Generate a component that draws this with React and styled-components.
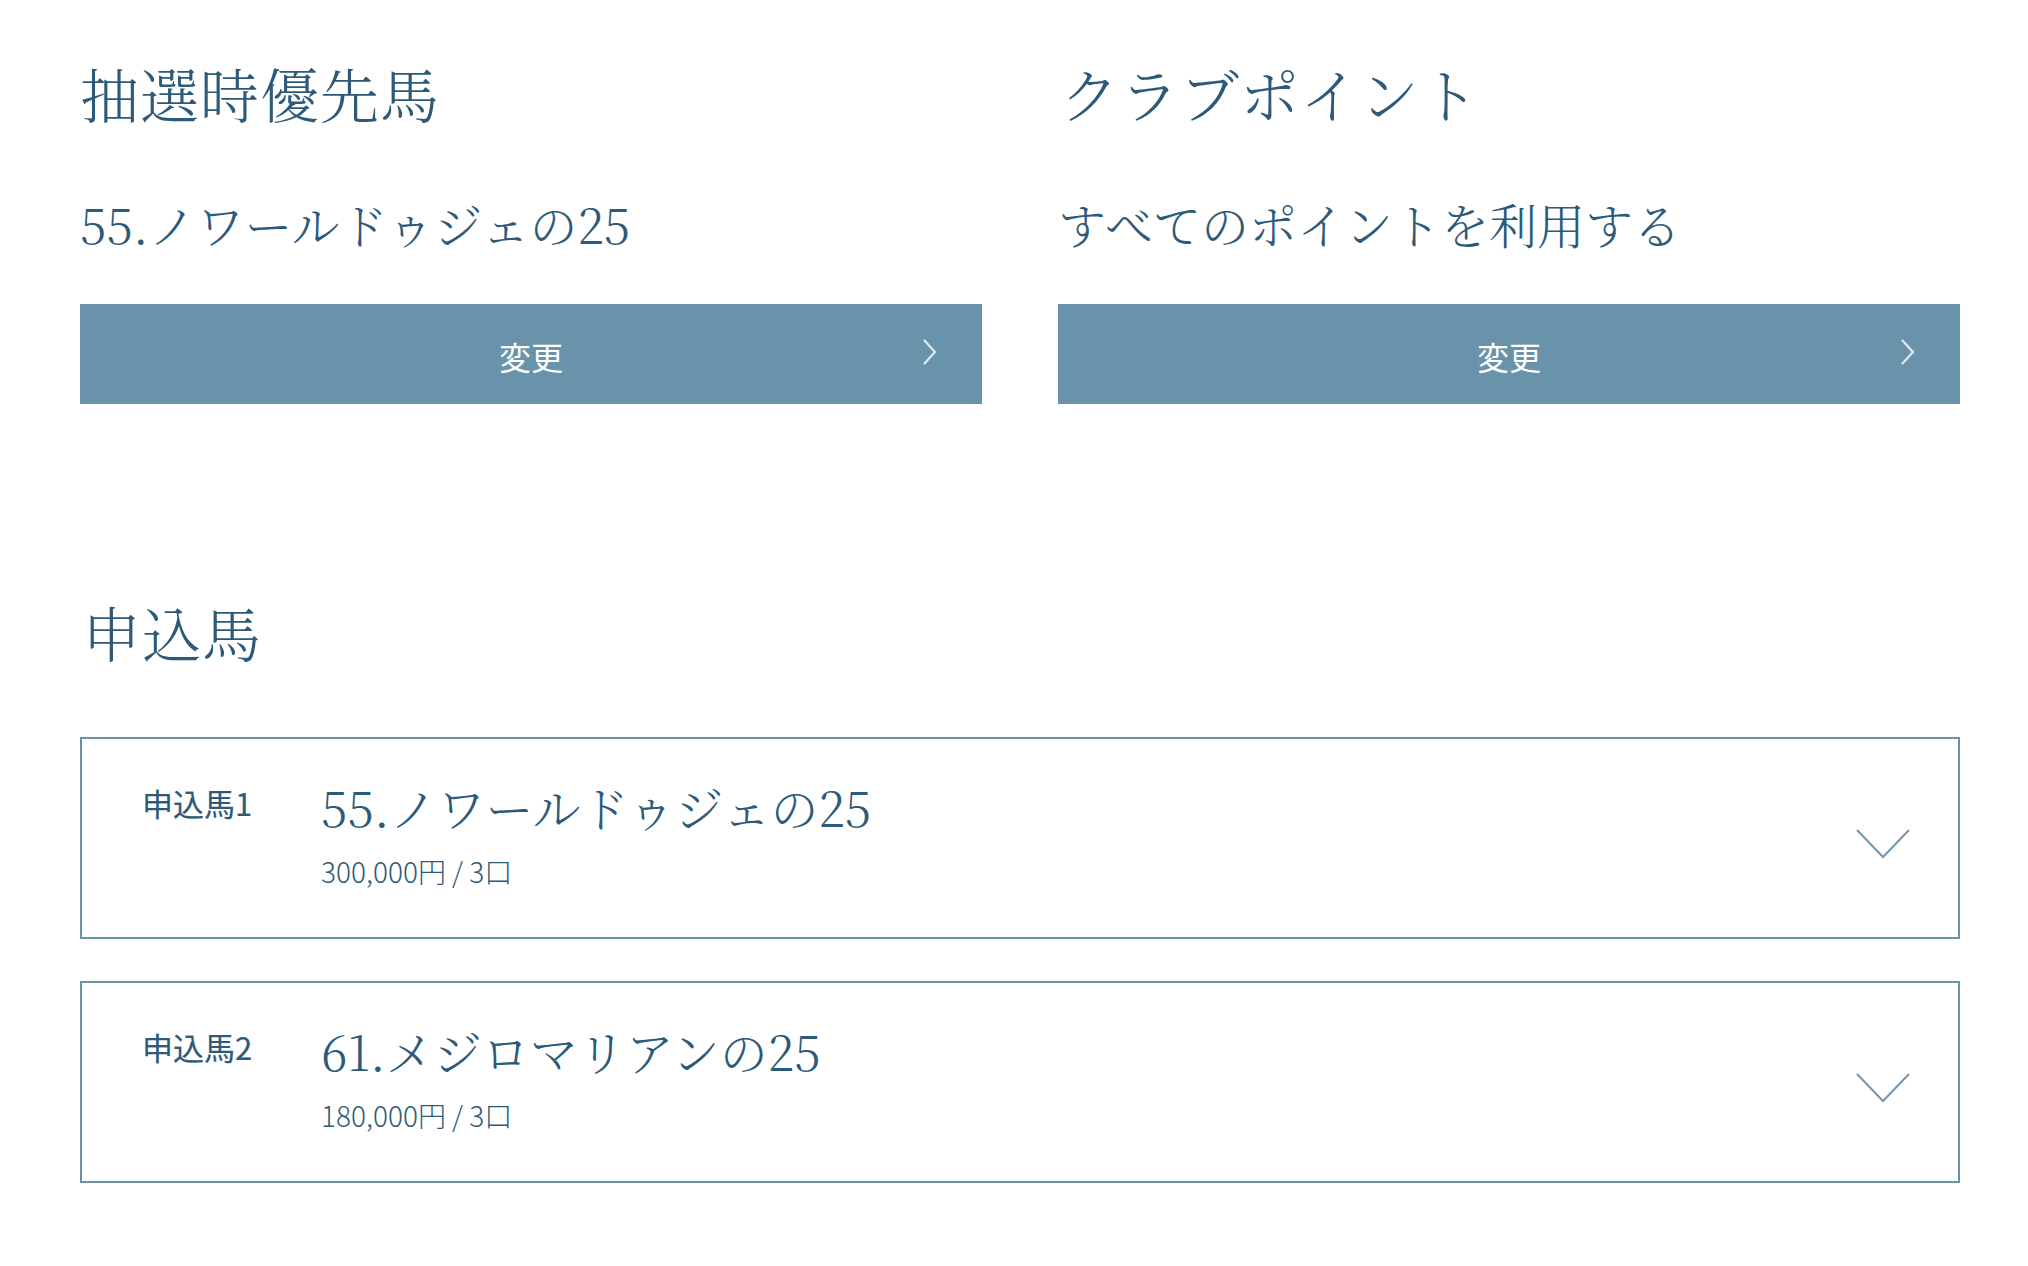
import React from 'react';
import styled, { createGlobalStyle } from 'styled-components';

const serif = `"Noto Serif CJK JP", "Noto Serif JP", "Liberation Serif", "Noto Sans CJK JP", serif`;
const sans = `"Noto Sans CJK JP", "Noto Sans", sans-serif`;
const ink = '#2d5a78';
const steel = '#6993ab';

const GlobalStyle = createGlobalStyle`
  * { box-sizing: border-box; }
  body {
    margin: 0;
    background: #fff;
    color: ${ink};
    font-family: ${sans};
  }
`;

const Page = styled.main`
  padding: 58px 68px 80px 80px;
`;

const TopGrid = styled.div`
  display: grid;
  grid-template-columns: 1fr 1fr;
  column-gap: 76px;
`;

const Column = styled.section`
  display: flex;
  flex-direction: column;
`;

const Heading = styled.h2`
  margin: 0;
  font-family: ${serif};
  font-weight: 300;
  font-size: 59px;
  line-height: 70px;
  letter-spacing: 1px;
  padding-left: ${(p) => p.$indent || 0}px;
`;

const Value = styled.p`
  margin: 67px 0 52px;
  font-family: ${serif};
  font-weight: 300;
  font-size: 48px;
  line-height: 57px;
`;

const ChangeButton = styled.button`
  display: grid;
  grid-template-columns: 1fr auto 1fr;
  align-items: center;
  width: 100%;
  height: 100px;
  padding: 4px 44px 0;
  border: none;
  background: ${steel};
  color: #fff;
  cursor: pointer;
  font-family: ${sans};
  font-weight: 400;
  font-size: 32px;

  span {
    grid-column: 2;
  }
  svg {
    grid-column: 3;
    justify-self: end;
    margin-top: -8px;
  }
`;

const Applications = styled.section`
  margin-top: 193px;
`;

const CardList = styled.div`
  display: flex;
  flex-direction: column;
  gap: 42px;
  margin-top: 70px;
`;

const Card = styled.div`
  display: flex;
  align-items: center;
  height: 202px;
  padding: 0 48px 0 60px;
  border: 2px solid ${steel};
`;

const Label = styled.div`
  width: 179px;
  flex-shrink: 0;
  align-self: flex-start;
  margin-top: 43px;
  font-family: ${sans};
  font-weight: 400;
  font-size: 31px;
  line-height: 42px;
  -webkit-text-stroke: 0.2px ${ink};
`;

const Body = styled.div`
  flex: 1;
  display: flex;
  flex-direction: column;
  gap: 17px;
  margin-top: -8px;
`;

const HorseName = styled.div`
  font-family: ${serif};
  font-weight: 300;
  font-size: 48px;
  line-height: 57px;
`;

const Price = styled.div`
  font-family: ${sans};
  font-weight: 300;
  font-size: 28px;
  line-height: 38px;
`;

const ChevronRight = () => (
  <svg width="16" height="28" viewBox="0 0 16 28" fill="none">
    <path d="M2 2 L13 14 L2 26" stroke="rgba(255,255,255,0.8)" strokeWidth="2.2" />
  </svg>
);

const DownWrap = styled.div`
  display: flex;
  margin-top: 12px;
`;

const ChevronDown = () => (
  <DownWrap>
    <svg width="54" height="30" viewBox="0 0 54 30" fill="none">
      <path d="M1 1 L27 28 L53 1" stroke="#7196ad" strokeWidth="2" />
    </svg>
  </DownWrap>
);

const entries = [
  { label: '申込馬1', name: '55.ノワールドゥジェの25', price: '300,000円 / 3口' },
  { label: '申込馬2', name: '61.メジロマリアンの25', price: '180,000円 / 3口' },
];

export default function App() {
  return (
    <>
      <GlobalStyle />
      <Page>
        <TopGrid>
          <Column>
            <Heading>抽選時優先馬</Heading>
            <Value>55.ノワールドゥジェの25</Value>
            <ChangeButton>
              <span>変更</span>
              <ChevronRight />
            </ChangeButton>
          </Column>
          <Column>
            <Heading $indent={2}>クラブポイント</Heading>
            <Value>すべてのポイントを利用する</Value>
            <ChangeButton>
              <span>変更</span>
              <ChevronRight />
            </ChangeButton>
          </Column>
        </TopGrid>

        <Applications>
          <Heading $indent={2}>申込馬</Heading>
          <CardList>
            {entries.map((e) => (
              <Card key={e.label}>
                <Label>{e.label}</Label>
                <Body>
                  <HorseName>{e.name}</HorseName>
                  <Price>{e.price}</Price>
                </Body>
                <ChevronDown />
              </Card>
            ))}
          </CardList>
        </Applications>
      </Page>
    </>
  );
}
